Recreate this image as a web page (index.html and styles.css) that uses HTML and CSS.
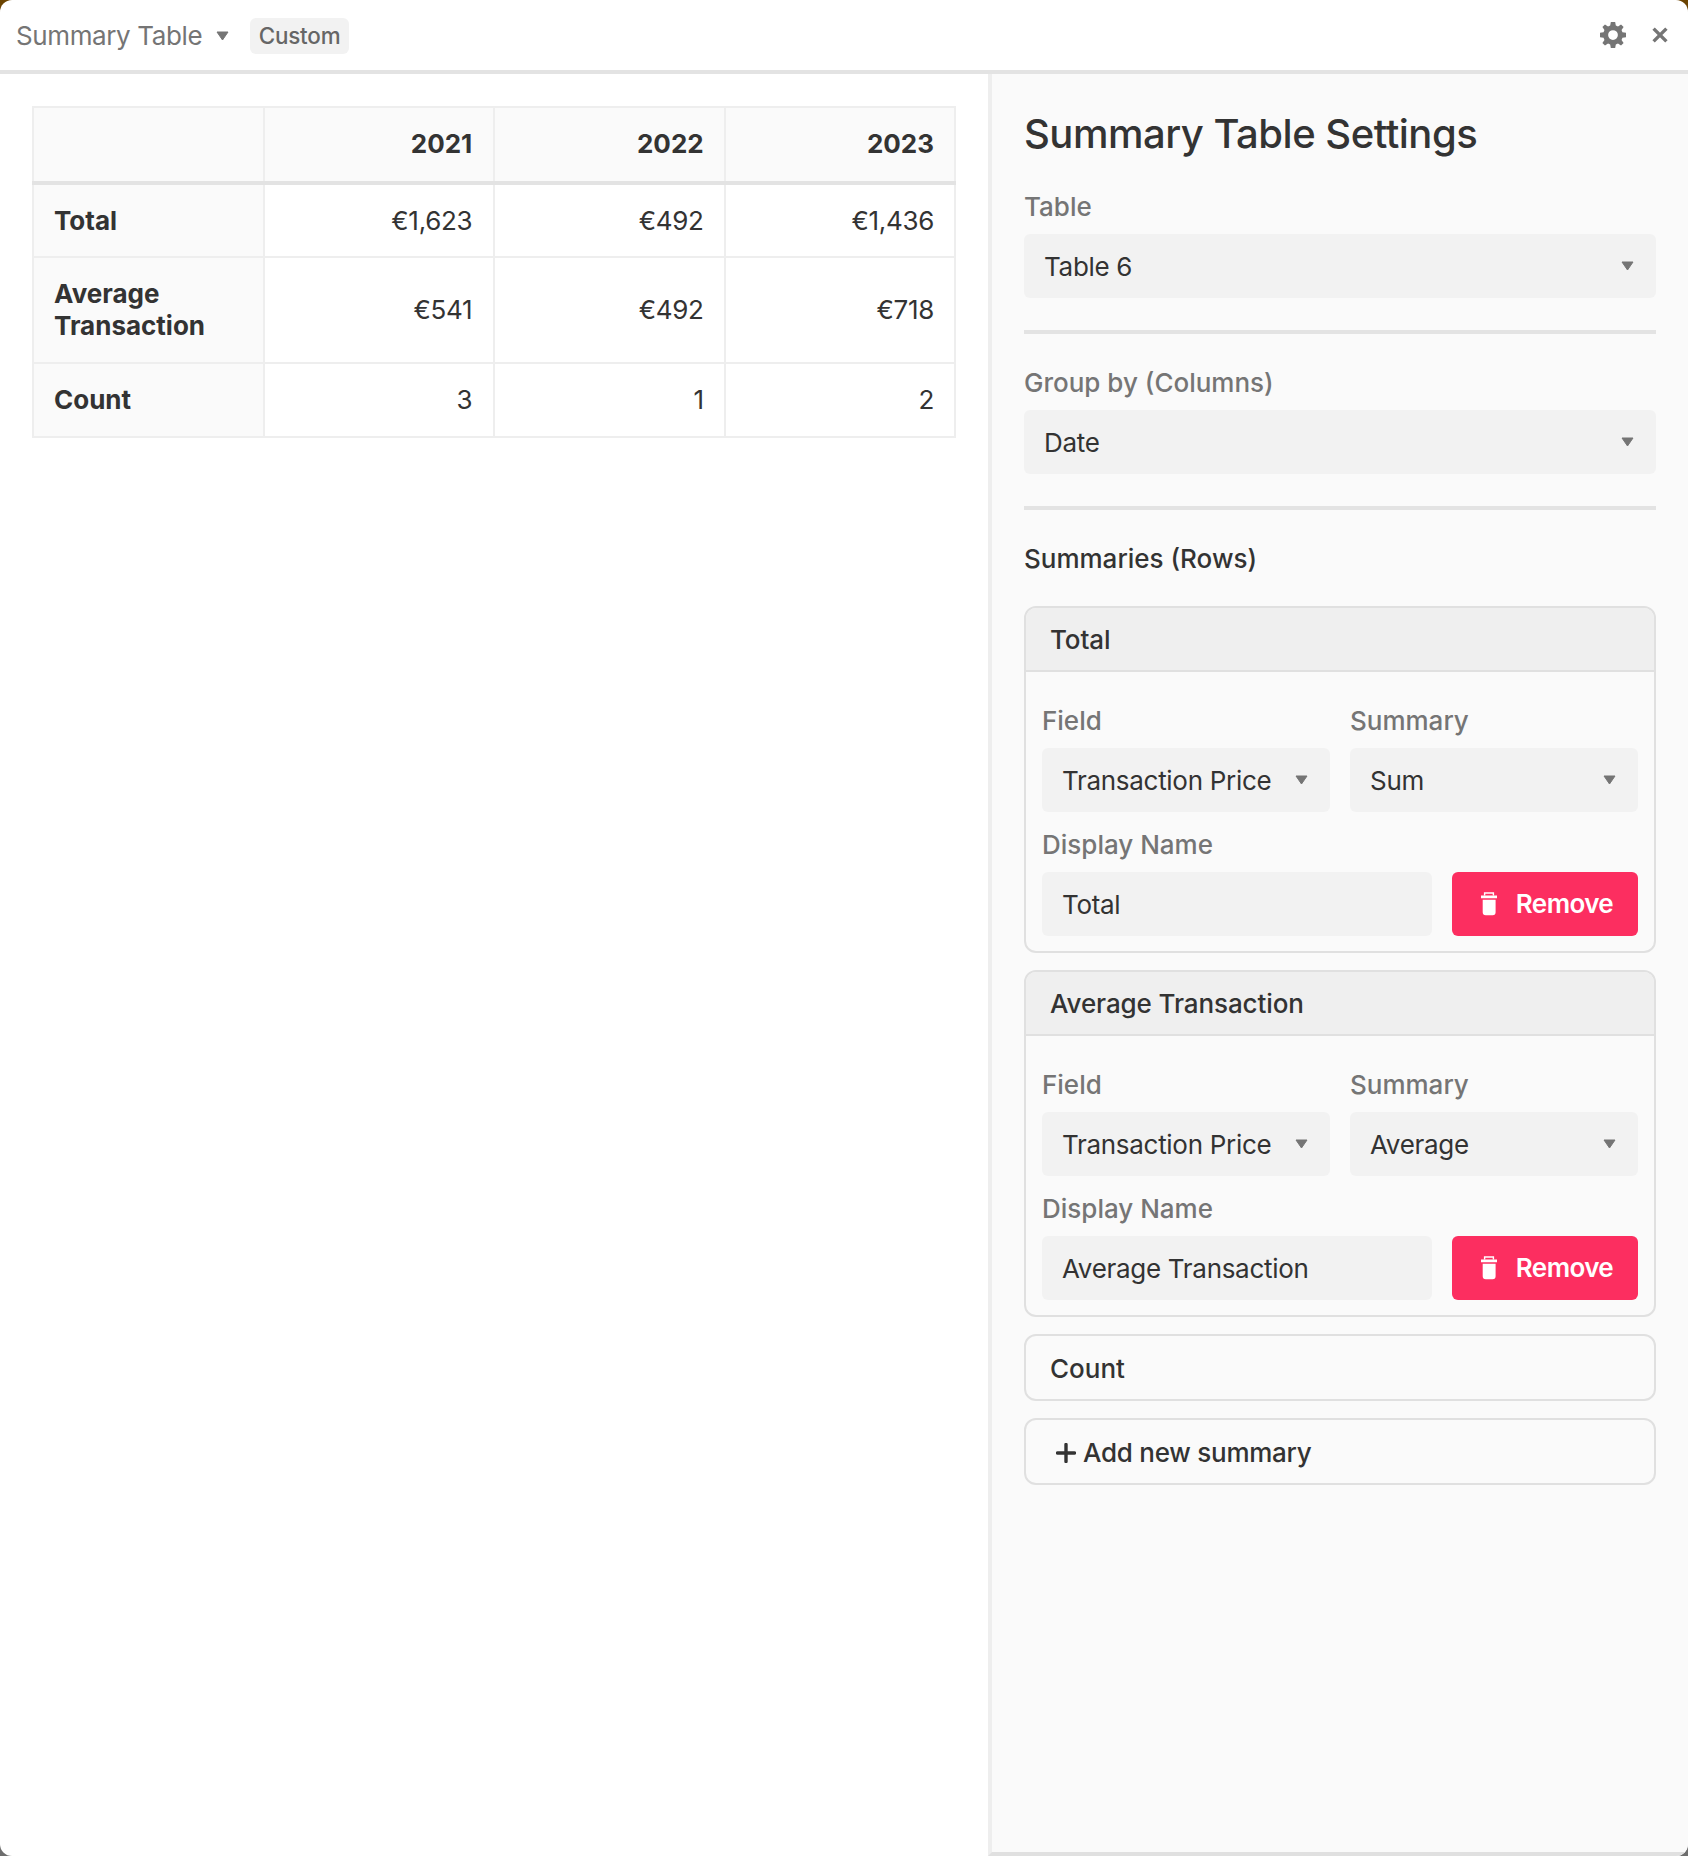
FILE: index.html
```html
<!DOCTYPE html>
<html lang="en">
<head>
<meta charset="utf-8">
<title>Summary Table</title>
<link rel="stylesheet" href="styles.css">
</head>
<body>
<div class="window">
  <header class="topbar">
    <div class="topbar-left">
      <span class="widget-title">Summary Table</span>
      <svg class="caret caret-top" viewBox="0 0 13 10"><path d="M1 1h11L6.5 9z"/></svg>
      <span class="tag">Custom</span>
    </div>
    <div class="topbar-right">
      <svg class="gear" viewBox="0 0 24 24"><path fill-rule="evenodd" d="M10 0h4l.6 3.3 2 .8L19.4 2.2l2.4 2.4-1.9 2.8.8 2 3.3.6v4l-3.3.6-.8 2 1.9 2.8-2.4 2.4-2.8-1.9-2 .8L14 24h-4l-.6-3.3-2-.8-2.8 1.9-2.4-2.4 1.9-2.8-.8-2L0 14v-4l3.3-.6.8-2L2.2 4.6l2.4-2.4 2.8 1.9 2-.8zM12 7.5a4.5 4.5 0 1 0 0 9 4.5 4.5 0 0 0 0-9z"/></svg>
      <svg class="close" viewBox="0 0 16 16"><path d="M1.6 1.6l12.8 12.8M14.4 1.6L1.6 14.4"/></svg>
    </div>
  </header>
  <div class="content">
    <main class="main">
      <table class="summary">
        <thead>
          <tr><th class="row-head"></th><th>2021</th><th>2022</th><th>2023</th></tr>
        </thead>
        <tbody>
          <tr class="r1"><th class="row-head">Total</th><td>€1,623</td><td>€492</td><td>€1,436</td></tr>
          <tr class="r2"><th class="row-head">Average Transaction</th><td>€541</td><td>€492</td><td>€718</td></tr>
          <tr class="r3"><th class="row-head">Count</th><td>3</td><td>1</td><td>2</td></tr>
        </tbody>
      </table>
    </main>
    <aside class="panel">
      <h1 class="panel-title">Summary Table Settings</h1>
      <label class="label">Table</label>
      <div class="select"><span>Table 6</span><svg class="caret" viewBox="0 0 13 10"><path d="M1 1h11L6.5 9z"/></svg></div>
      <hr class="divider">
      <label class="label">Group by (Columns)</label>
      <div class="select"><span>Date</span><svg class="caret" viewBox="0 0 13 10"><path d="M1 1h11L6.5 9z"/></svg></div>
      <hr class="divider">
      <div class="section-title">Summaries (Rows)</div>

      <section class="card">
        <div class="card-head">Total</div>
        <div class="card-body">
          <div class="two">
            <div class="col"><label class="label">Field</label><div class="select"><span>Transaction Price</span><svg class="caret" viewBox="0 0 13 10"><path d="M1 1h11L6.5 9z"/></svg></div></div>
            <div class="col"><label class="label">Summary</label><div class="select"><span>Sum</span><svg class="caret" viewBox="0 0 13 10"><path d="M1 1h11L6.5 9z"/></svg></div></div>
          </div>
          <label class="label">Display Name</label>
          <div class="name-row">
            <div class="input"><span>Total</span></div>
            <button class="remove"><svg class="trash" viewBox="0 0 16 24"><path class="trash-handle" d="M3.6 3.6V1h8.8v2.6"/><path d="M0 3.4h16v2.8H0zM1.7 7.8h12.9v12.4a3 3 0 0 1-3 3H4.7a3 3 0 0 1-3-3z"/></svg>Remove</button>
          </div>
        </div>
      </section>

      <section class="card">
        <div class="card-head">Average Transaction</div>
        <div class="card-body">
          <div class="two">
            <div class="col"><label class="label">Field</label><div class="select"><span>Transaction Price</span><svg class="caret" viewBox="0 0 13 10"><path d="M1 1h11L6.5 9z"/></svg></div></div>
            <div class="col"><label class="label">Summary</label><div class="select"><span>Average</span><svg class="caret" viewBox="0 0 13 10"><path d="M1 1h11L6.5 9z"/></svg></div></div>
          </div>
          <label class="label">Display Name</label>
          <div class="name-row">
            <div class="input"><span>Average Transaction</span></div>
            <button class="remove"><svg class="trash" viewBox="0 0 16 24"><path class="trash-handle" d="M3.6 3.6V1h8.8v2.6"/><path d="M0 3.4h16v2.8H0zM1.7 7.8h12.9v12.4a3 3 0 0 1-3 3H4.7a3 3 0 0 1-3-3z"/></svg>Remove</button>
          </div>
        </div>
      </section>

      <div class="card card-plain">Count</div>
      <div class="card card-plain card-add"><svg class="plus" viewBox="0 0 20 20"><path d="M10 1.5v17M1.5 10h17"/></svg>Add new summary</div>
    </aside>
  </div>
</div>
</body>
</html>
```

FILE: styles.css
```css
* { box-sizing: border-box; }
html, body { margin: 0; height: 100%; }
body {
  width: 1688px;
  height: 1856px;
  overflow: hidden;
  background: linear-gradient(#6b4300 0 50%, #6e6e6e 50% 100%);
  font-family: Inter, "Liberation Sans", sans-serif;
  font-size: 26px;
  line-height: 32px;
  color: #333;
}
.window {
  width: 1688px;
  height: 1856px;
  display: flex;
  flex-direction: column;
  background: #fff;
  border-radius: 12px;
  overflow: hidden;
}
.topbar {
  flex: none;
  height: 74px;
  border-bottom: 4px solid #e3e3e3;
  display: flex;
  justify-content: space-between;
  align-items: center;
  padding: 0 20px 0 16px;
}
.topbar-left, .topbar-right { display: flex; align-items: center; }
.topbar-left { padding-top: 2px; }
.widget-title { color: #757575; letter-spacing: -0.38px; }
.caret { width: 13px; height: 10px; fill: #757575; stroke: #757575; stroke-width: 1; stroke-linejoin: round; flex: none; }
.caret-top { margin: 0 21px 0 14px; }
.tag {
  background: #f2f2f2;
  border-radius: 6px;
  color: #666;
  font-size: 22.4px;
  letter-spacing: -0.2px;
  font-weight: 500;
  height: 36px;
  line-height: 36px;
  padding: 0 8.5px;
}
.gear { width: 26px; height: 26px; fill: #757575; margin-right: 26px; }
.close { width: 16px; height: 16px; fill: none; stroke: #757575; stroke-width: 3.4; }
.content { flex: 1; display: flex; min-height: 0; }
.main { flex: none; width: 988px; padding: 32px; }
.summary {
  border-collapse: collapse;
  table-layout: fixed;
  width: 924px;
}
.summary th, .summary td {
  border: 2px solid #eee;
  padding: 0 20px;
  text-align: right;
  font-weight: 400;
}
.summary td { letter-spacing: -0.3px; }
.summary td:nth-child(2), .summary thead th:nth-child(2) { padding-right: 21px; }
.summary thead th { height: 76px; background: #fafafa; font-weight: 700; border-bottom: 4px solid #e3e3e3; padding-bottom: 2px; }
.summary .row-head { width: 231px; background: #fafafa; text-align: left; font-weight: 700; }
.r1 { height: 74px; }
.r2 { height: 106px; }
.r3 { height: 74px; }
.panel {
  flex: 1;
  background: #fafafa;
  border-left: 4px solid #eee;
  border-bottom: 4px solid #e0e0e0;
  padding: 35px 32px 0;
}
.panel-title { margin: 0 0 31px; font-size: 40px; line-height: 50px; font-weight: 550; letter-spacing: -0.5px; }
.label { display: block; color: #757575; font-weight: 500; height: 32px; margin-bottom: 12px; }
.panel > .label { padding-top: 1px; }
.col .label, .card-body > .label { margin-bottom: 11px; }
.select, .input {
  background: #f2f2f2;
  border-radius: 6px;
  height: 64px;
  padding: 0 22px 0 20px;
  display: flex;
  align-items: center;
  justify-content: space-between;
  letter-spacing: -0.3px;
}
.select span, .input span { padding-top: 2px; }
.divider { border: 0; height: 4px; background: #e3e3e3; margin: 32px 0 32px; }
.section-title { font-weight: 500; height: 33px; padding-top: 1px; margin-bottom: 31px; }
.card {
  border: 2px solid #e0e0e0;
  border-radius: 12px;
  margin-bottom: 17px;
  overflow: hidden;
}
.card-head {
  height: 64px;
  background: #efefef;
  border-bottom: 2px solid #e0e0e0;
  font-weight: 500;
  letter-spacing: -0.1px;
  display: flex;
  align-items: center;
  padding: 2px 24px 0;
}
.card-body { padding: 33px 16px 15px; }
.two { display: flex; gap: 20px; margin-bottom: 17px; }
.col { flex: 1; min-width: 0; }
.name-row { display: flex; gap: 20px; }
.input { flex: 1; }
.remove {
  flex: none;
  width: 186px;
  height: 64px;
  padding: 0 0 0 4px;
  background: #fc2e60;
  color: #fff;
  border: 0;
  border-radius: 6px;
  font: 600 26px/32px Inter, "Liberation Sans", sans-serif;
  letter-spacing: -0.6px;
  display: flex;
  align-items: center;
  justify-content: center;
  gap: 19px;
}
.trash { width: 16px; height: 24px; fill: #fff; }
.trash-handle { fill: none; stroke: #fff; stroke-width: 1.4; }
.card-plain { height: 67px; display: flex; align-items: center; padding: 2px 24px 0; font-weight: 500; }
.card-add { padding-left: 30px; gap: 7px; letter-spacing: -0.25px; }
.plus { width: 20px; height: 20px; stroke: #333; stroke-width: 3.4; fill: none; stroke-linecap: round; }
```
